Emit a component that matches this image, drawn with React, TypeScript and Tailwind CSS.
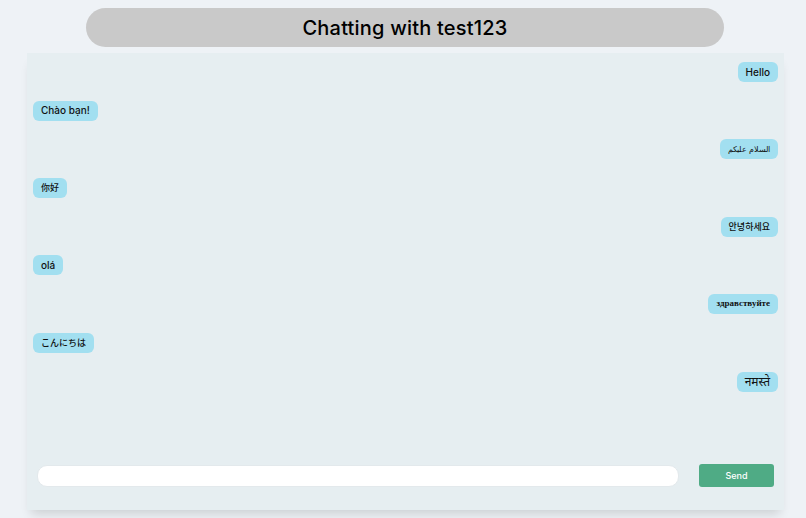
import React from "react";

const messages: { text: string; mine: boolean; kind?: string }[] = [
  { text: "Hello", mine: true },
  { text: "Chào bạn!", mine: false },
  { text: "السلام عليكم", mine: true, kind: "ar" },
  { text: "你好", mine: false, kind: "cjk" },
  { text: "안녕하세요", mine: true, kind: "cjk" },
  { text: "olá", mine: false },
  { text: "здравствуйте", mine: true, kind: "serif" },
  { text: "こんにちは", mine: false, kind: "cjk" },
  { text: "नमस्ते", mine: true, kind: "hi" },
];

function styleFor(kind?: string): React.CSSProperties | undefined {
  if (kind === "serif") return { fontFamily: '"Liberation Serif", "DejaVu Serif", serif', fontSize: "9px", fontWeight: 700 };
  if (kind === "ar") return { fontSize: "8px" };
  if (kind === "cjk") return { fontSize: "9px" };
  if (kind === "hi") return { fontSize: "12px", fontWeight: 400 };
  return undefined;
}

export default function App() {
  return (
    <div
      className="min-h-screen w-full bg-[#eef2f6] pt-[8px] text-black"
      style={{ fontFamily: '"Inter", "Noto Sans", "Noto Sans CJK SC", "Noto Sans CJK KR", sans-serif' }}
    >
      <div className="ml-[86px] mr-[82px] flex h-[39px] items-center justify-center rounded-[20px] bg-[#c9c9c9]">
        <h1 className="text-[20px] font-medium tracking-[0.2px]">Chatting with test123</h1>
      </div>
      <div className="ml-[27px] mr-[22px] mt-[6px] flex h-[457px] flex-col bg-[#e6eef1] shadow-[0_8px_10px_-4px_rgba(0,0,0,0.14)]">
        <div className="flex flex-1 flex-col gap-[18.7px] px-[6px] pt-[9px]">
          {messages.map((m, i) => (
            <div key={i} className={m.mine ? "flex justify-end" : "flex justify-start"}>
              <div
                className="flex h-[20px] items-center rounded-[6px] bg-[#a2dff0] px-[8px] text-[10px] font-medium text-[#111]"
                style={styleFor(m.kind)}
              >
                {m.text}
              </div>
            </div>
          ))}
        </div>
        <div className="flex items-center gap-[20px] px-[10px] pb-[23px]">
          <input
            type="text"
            className="h-[22px] flex-1 rounded-[10px] border border-[#e3e9ec] bg-white px-3 text-[11px] outline-none"
          />
          <button className="flex h-[23px] w-[75px] items-center justify-center rounded-[3px] bg-[#4fab85] text-[9px] font-medium text-white">
            Send
          </button>
        </div>
      </div>
    </div>
  );
}
